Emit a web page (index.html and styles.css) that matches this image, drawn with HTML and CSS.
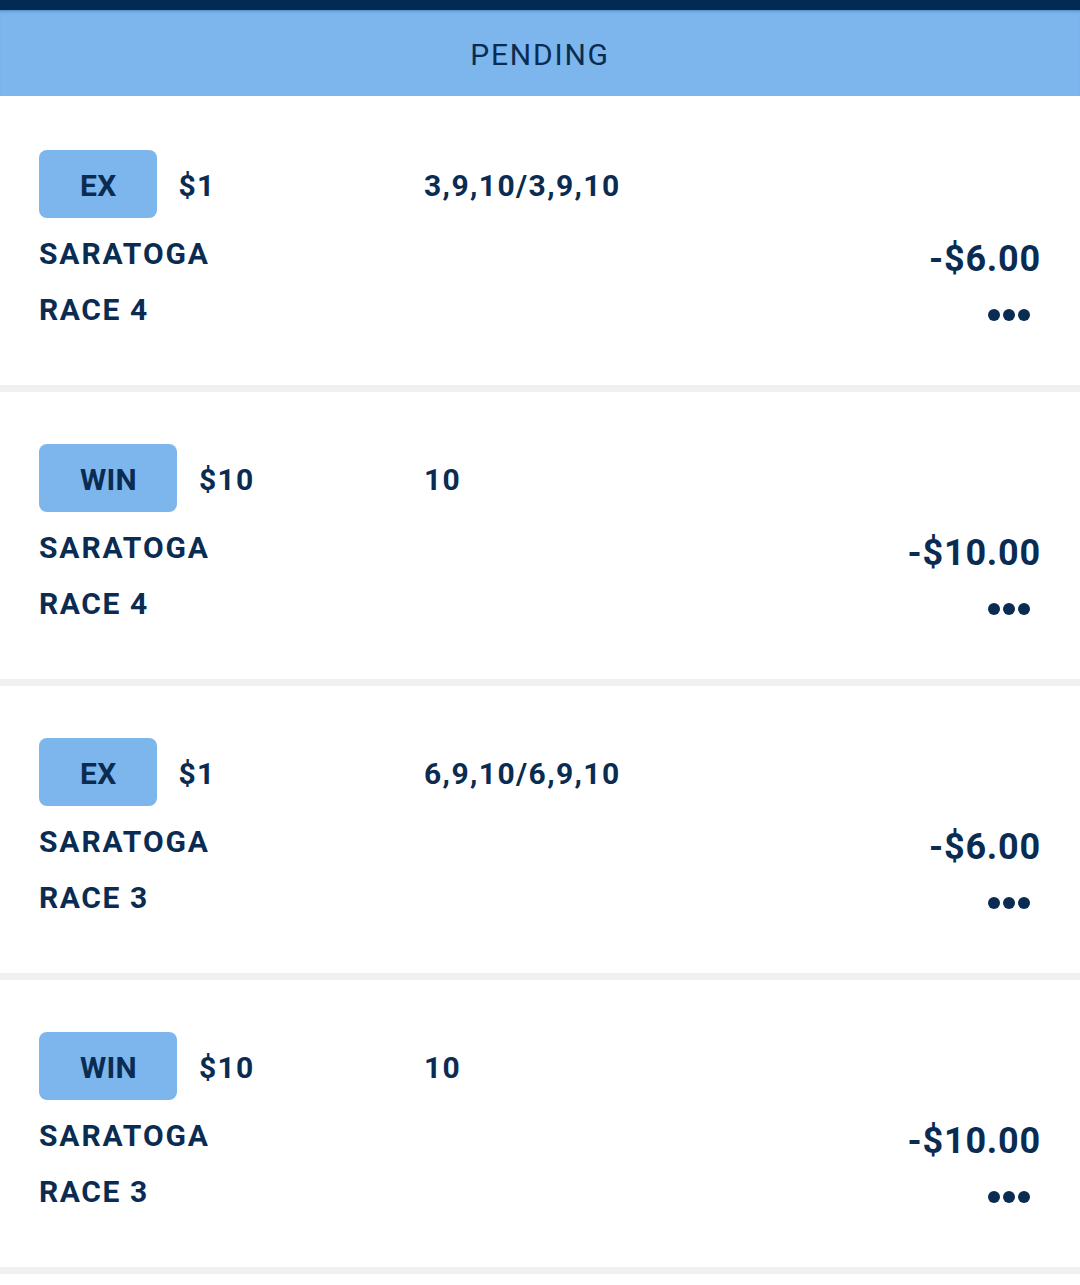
FILE: index.html
```html
<!DOCTYPE html>
<html lang="en">

<head>
  <meta charset="utf8">
  <title>Pending bets</title>
  <link rel="stylesheet" href="styles.css">
</head>

<body>

  <div class="statusbar"></div>
  <header class="tab-title">PENDING</header>

  <div class="bets">
    <div class="bet">
      <div class="info">
        <div class="top-row">
          <div class="wager">
            <span class="type">EX</span>
            <span class="stake">$1</span>
          </div>
          <span class="selection">3,9,10/3,9,10</span>
        </div>
        <div class="track">SARATOGA</div>
        <div class="race">RACE 4</div>
      </div>
      <div class="result">
        <div class="amount">-$6.00</div>
        <div class="more"><i></i><i></i><i></i></div>
      </div>
    </div>

    <div class="bet">
      <div class="info">
        <div class="top-row">
          <div class="wager">
            <span class="type">WIN</span>
            <span class="stake">$10</span>
          </div>
          <span class="selection">10</span>
        </div>
        <div class="track">SARATOGA</div>
        <div class="race">RACE 4</div>
      </div>
      <div class="result">
        <div class="amount">-$10.00</div>
        <div class="more"><i></i><i></i><i></i></div>
      </div>
    </div>

    <div class="bet">
      <div class="info">
        <div class="top-row">
          <div class="wager">
            <span class="type">EX</span>
            <span class="stake">$1</span>
          </div>
          <span class="selection">6,9,10/6,9,10</span>
        </div>
        <div class="track">SARATOGA</div>
        <div class="race">RACE 3</div>
      </div>
      <div class="result">
        <div class="amount">-$6.00</div>
        <div class="more"><i></i><i></i><i></i></div>
      </div>
    </div>

    <div class="bet">
      <div class="info">
        <div class="top-row">
          <div class="wager">
            <span class="type">WIN</span>
            <span class="stake">$10</span>
          </div>
          <span class="selection">10</span>
        </div>
        <div class="track">SARATOGA</div>
        <div class="race">RACE 3</div>
      </div>
      <div class="result">
        <div class="amount">-$10.00</div>
        <div class="more"><i></i><i></i><i></i></div>
      </div>
    </div>
  </div>

</body>

</html>
```

FILE: styles.css
```css
* {
  box-sizing: border-box;
}

body {
  margin: 0;
  background-color: white;
  font-family: Roboto, "Liberation Sans", sans-serif;
  color: #0b2c52;
}

div.statusbar {
  height: 10px;
  background-color: #032a53;
}

header.tab-title {
  height: 86px;
  line-height: 90px;
  text-align: center;
  background-color: #7cb6ed;
  box-shadow: inset 0 3px 3px -2px rgba(3, 42, 83, .35);
  font-size: 30px;
  letter-spacing: 1.8px;
  color: #0b2c52;
}

div.bets {
  display: flex;
  flex-direction: column;
  row-gap: 7px;
  margin-top: 2px;
  padding-bottom: 7px;
  background-color: #f0f0f0;
}

div.bet {
  display: grid;
  grid-template-columns: 1fr auto;
  height: 287px;
  padding: 52px 40px 0 39px;
  background-color: white;
  font-weight: 700;
  font-size: 30px;
}

div.bet div.top-row {
  display: grid;
  grid-template-columns: 385px auto;
  align-items: center;
  height: 68px;
  line-height: 36px;
}

div.bet div.wager {
  display: flex;
  align-items: center;
  column-gap: 22px;
}

div.bet span.type {
  height: 68px;
  line-height: 71px;
  padding: 0 40px 0 41px;
  border-radius: 8px;
  background-color: #7cb6ed;
  letter-spacing: .3px;
}

div.bet span.stake {
  padding-top: 3px;
  letter-spacing: 1.2px;
}

div.bet span.selection {
  padding-top: 3px;
  letter-spacing: 1.4px;
}

div.bet div.track {
  margin-top: 8px;
  line-height: 56px;
  letter-spacing: 1.9px;
}

div.bet div.race {
  line-height: 56px;
  letter-spacing: 1.6px;
}

div.bet div.result {
  display: flex;
  flex-direction: column;
  align-items: flex-end;
  padding-top: 76px;
}

div.bet div.amount {
  font-size: 36px;
  line-height: 66px;
  letter-spacing: .8px;
  margin-right: -1px;
}

div.bet div.more {
  display: flex;
  align-items: center;
  column-gap: 3px;
  height: 46px;
  padding-right: 10px;
}

div.bet div.more i {
  width: 12px;
  height: 12px;
  border-radius: 50%;
  background-color: #0b2c52;
}
```
